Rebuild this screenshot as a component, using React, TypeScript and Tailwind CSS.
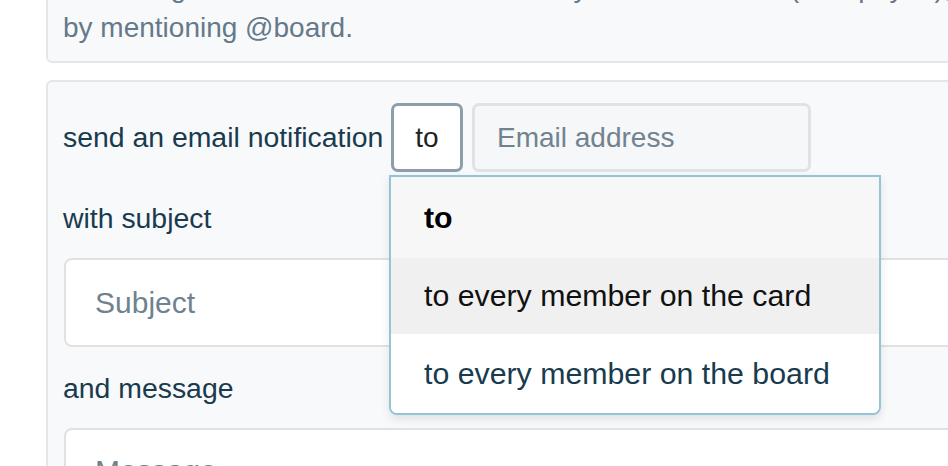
export default function App() {
  return (
    <div className="relative w-[948px] h-[466px] overflow-hidden bg-white font-['Liberation_Sans',Arial,sans-serif]">
      <div className="ml-[46px] mt-[-60px] w-[1000px] flex flex-col">
        {/* top panel */}
        <div className="rounded-[6px] border-2 border-[#e3e6ea] bg-[#f8f9fb] pt-[24px] pb-[14px] px-[15px] text-[28px] text-[#65798a] whitespace-nowrap overflow-hidden">
          <div className="leading-[43px]">A message will be sent to members: everyone on the card (except you), or everyone</div>
          <div className="leading-[38px]">by mentioning @board.</div>
        </div>

        {/* action panel */}
        <div className="mt-[17px] rounded-[6px] border-2 border-[#e3e6ea] bg-[#f8f9fb] pt-[21px] px-[15px] pb-[40px] text-[28.4px] text-[#183b4e]">
          <div className="flex items-center h-[69px]">
            <div className="w-[328px] whitespace-nowrap">send an email notification</div>
            <div className="w-[72px] h-[69px] border-[3px] border-[#8d9eab] rounded-[7px] bg-white flex items-center justify-center text-[28px] text-[#222]">
              to
            </div>
            <div className="ml-[9px] w-[339px] h-[69px] border-[3px] border-[#dfe3e6] rounded-[7px] bg-[#f5f7f8] pl-[22px] flex items-center text-[28px] text-[#71838f]">
              Email address
            </div>
          </div>

          <div className="mt-[24px] h-[44px] leading-[44px]">with subject</div>

          <div className="mt-[18px] ml-[1px] h-[89px] border-2 border-[#dfe1e3] rounded-[8px] bg-white pl-[29px] flex items-center text-[30px] text-[#6e8290]">
            Subject
          </div>

          <div className="mt-[19px] h-[44px] leading-[44px]">and message</div>

          <div className="mt-[18px] ml-[1px] h-[120px] border-2 border-[#dfe1e3] rounded-[8px] bg-white pl-[29px] pt-[23px] leading-[36px] text-[30px] text-[#6e8290]">
            Message
          </div>
        </div>
      </div>

      {/* dropdown menu */}
      <div className="absolute left-[389px] top-[175px] w-[492px] border-2 border-[#92c5d8] rounded-b-[8px] bg-white shadow-[0_4px_10px_rgba(0,0,0,0.10)] overflow-hidden text-[30.3px]">
        <div className="h-[81px] bg-[#f7f7f7] font-bold text-black pl-[33px] flex items-center">to</div>
        <div className="h-[76px] bg-[#f0f0f0] text-[#111] pl-[33px] flex items-center whitespace-nowrap">
          to every member on the card
        </div>
        <div className="h-[79px] bg-white text-[#183b4e] pl-[33px] flex items-center whitespace-nowrap">
          to every member on the board
        </div>
      </div>
    </div>
  );
}
